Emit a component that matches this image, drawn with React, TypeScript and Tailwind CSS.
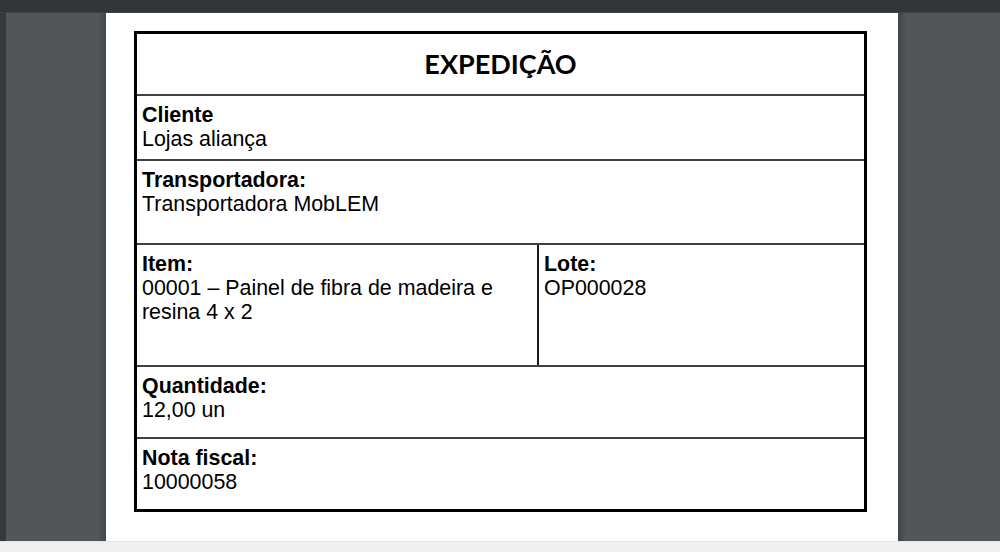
import React from "react";

const arial = { fontFamily: '"Liberation Sans", Arial, sans-serif' };

function Cell({ label, value, className = "" }: { label: string; value: React.ReactNode; className?: string }) {
  return (
    <div className={`px-[5px] pt-[7px] text-[21.4px] leading-[24px] text-black ${className}`} style={arial}>
      <div className="font-bold">{label}</div>
      <div>{value}</div>
    </div>
  );
}

export default function App() {
  return (
    <div className="w-[1000px] h-[552px] overflow-hidden flex flex-col bg-[#525659]">
      <div className="h-[13px] bg-[#323639] border-b border-dotted border-[#4a4e52]" />
      <div className="h-[528px] flex">
        <div className="w-[6px] bg-[#36393c]" />
        <div className="w-[100px] bg-[linear-gradient(to_right,#525659_92%,#45484b)]" />
        <div className="w-[792px] bg-white pt-[18px] pl-[28px]">
          <div className="w-[733px] h-[481px] border-[3px] border-black flex flex-col">
            <div className="h-[62px] shrink-0 border-b-2 border-[#404040] flex items-center justify-center">
              <span className="text-[27px] font-bold text-black" style={{ fontFamily: 'Lato, "Open Sans", sans-serif' }}>
                EXPEDIÇÃO
              </span>
            </div>
            <Cell label="Cliente" value="Lojas aliança" className="h-[65px] shrink-0 border-b-2 border-[#404040]" />
            <Cell
              label="Transportadora:"
              value="Transportadora MobLEM"
              className="h-[84px] shrink-0 border-b-2 border-[#404040]"
            />
            <div className="h-[122px] shrink-0 border-b-2 border-[#404040] flex">
              <Cell
                label="Item:"
                value={
                  <>
                    <span className="whitespace-nowrap">00001 – Painel de fibra de madeira e</span>
                    <br />
                    resina 4 x 2
                  </>
                }
                className="w-[402px] shrink-0 border-r-2 border-[#1a1a1a]"
              />
              <Cell label="Lote:" value="OP000028" className="flex-1" />
            </div>
            <Cell label="Quantidade:" value="12,00 un" className="h-[72px] shrink-0 border-b-2 border-[#404040]" />
            <Cell label="Nota fiscal:" value="10000058" className="flex-1" />
          </div>
        </div>
        <div className="w-[8px] bg-[linear-gradient(to_right,#404346,#525659)]" />
        <div className="flex-1 bg-[#525659]" />
      </div>
      <div className="h-[11px] bg-[#f0f0f0] border-t border-[#e4e4e4]" />
    </div>
  );
}
